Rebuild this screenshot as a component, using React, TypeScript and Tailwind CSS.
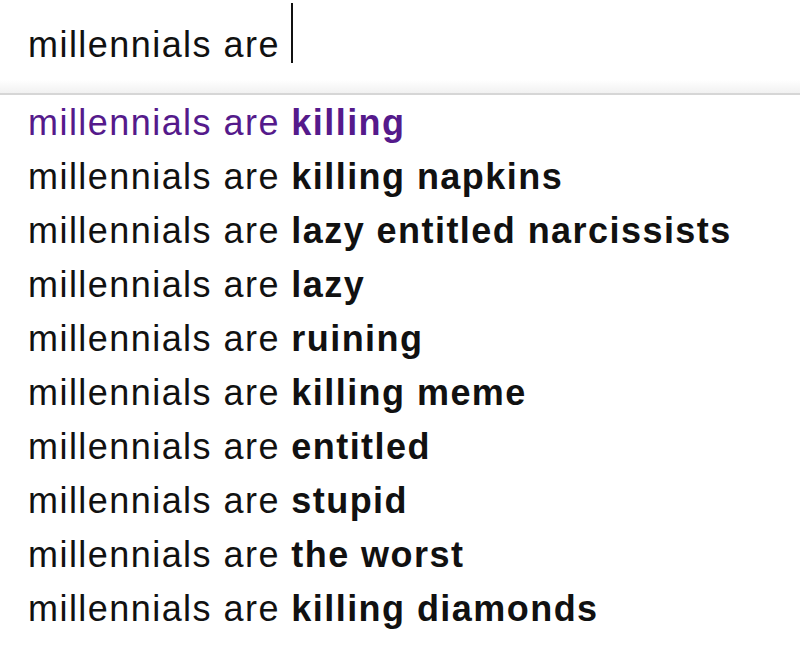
const QUERY = 'millennials are'

const SUGGESTIONS: string[] = [
  'killing',
  'killing napkins',
  'lazy entitled narcissists',
  'lazy',
  'ruining',
  'killing meme',
  'entitled',
  'stupid',
  'the worst',
  'killing diamonds',
]

function SearchBox() {
  return (
    <div className="flex flex-col">
      <div className="flex items-start h-[80px] pl-[28px]">
        <span className="mt-[18px] leading-[54px] text-[#111]">{QUERY}&nbsp;</span>
        <div className="mt-[3px] h-[60px] w-[2px] bg-[#111]" />
      </div>
      <div className="h-[13px] bg-gradient-to-b from-white to-[#f1f1f1]" />
      <div className="h-[2px] bg-[#d6d6d6]" />
    </div>
  )
}

function Suggestion({ rest, visited }: { rest: string; visited?: boolean }) {
  return (
    <li className={`pl-[28px] leading-[54px] whitespace-nowrap ${visited ? 'text-[#551a8b]' : 'text-[#111]'}`}>
      {QUERY} <b className="font-bold">{rest}</b>
    </li>
  )
}

export default function App() {
  return (
    <div className="w-[800px] h-[649px] overflow-hidden bg-white font-['Liberation_Sans',Arial,sans-serif] text-[36px] tracking-[1.45px]">
      <SearchBox />
      <ul className="mt-[1px]">
        {SUGGESTIONS.map((s, i) => (
          <Suggestion key={s} rest={s} visited={i === 0} />
        ))}
      </ul>
    </div>
  )
}
